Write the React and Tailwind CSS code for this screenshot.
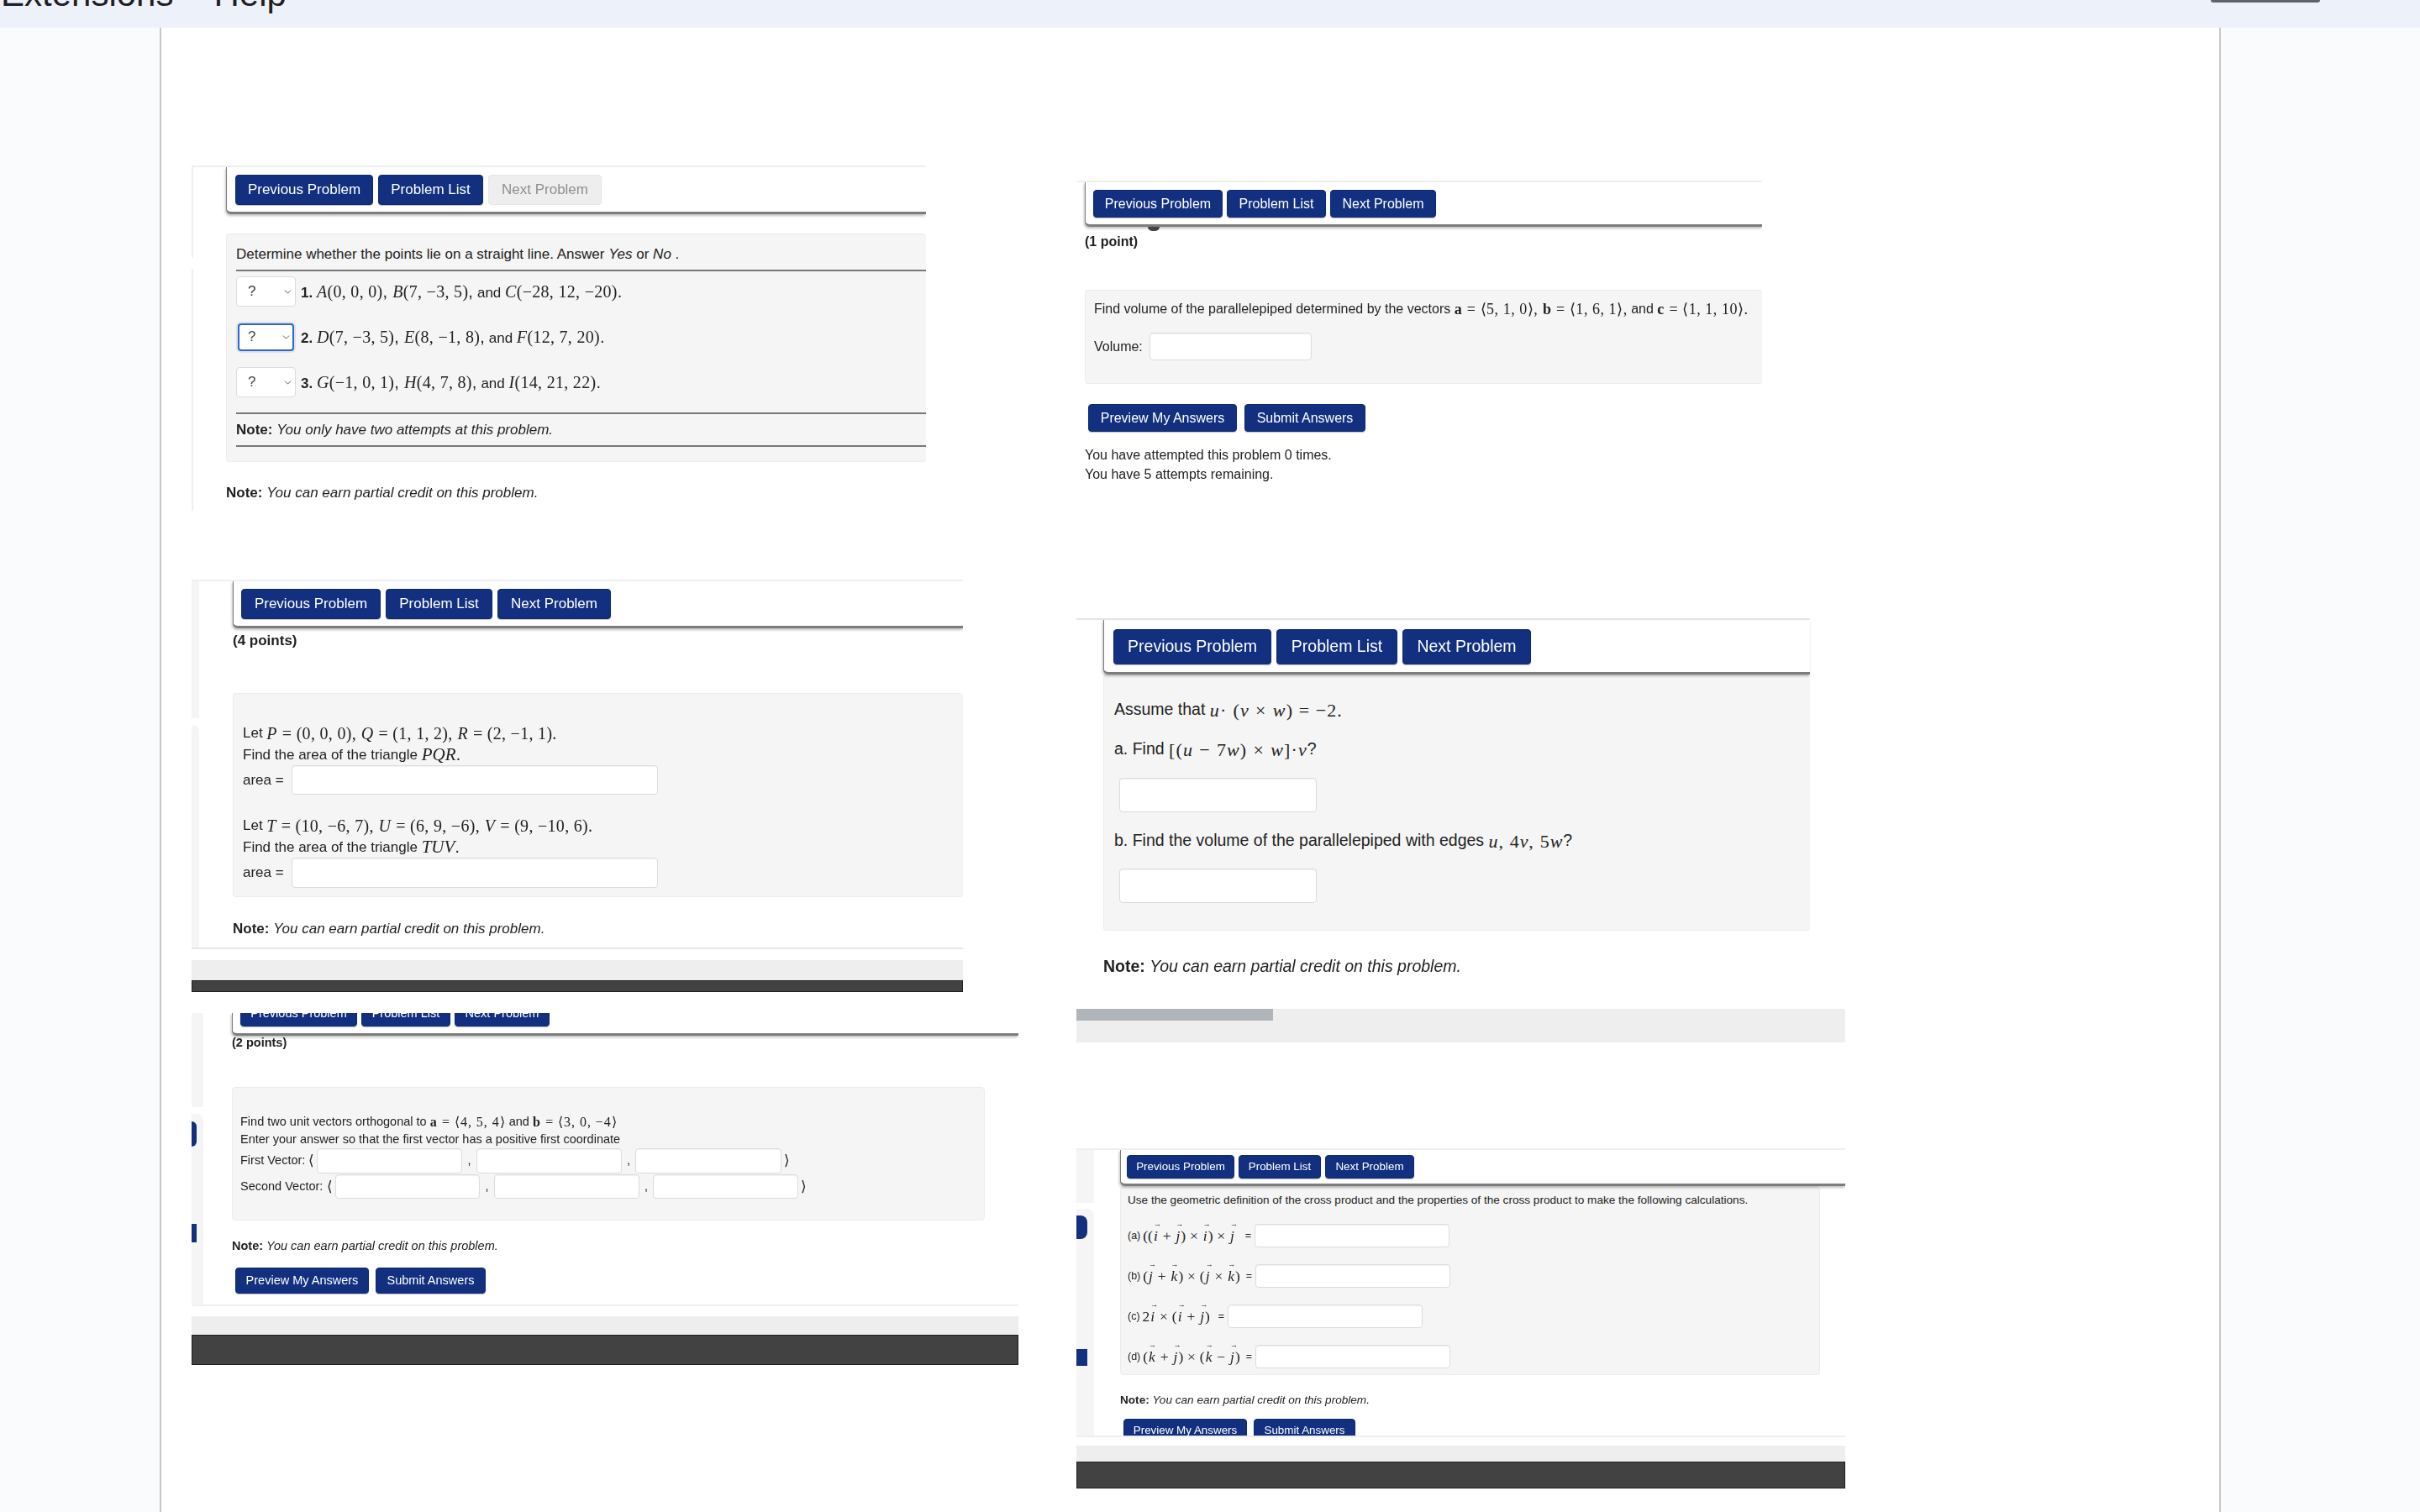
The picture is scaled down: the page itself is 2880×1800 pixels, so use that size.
import { ChevronDown } from "lucide-react";

const serif = "font-['Liberation_Serif']";
const panelBlur = "blur-[0.5px]";

function Mi({ children }) {
  return <i className={serif}>{children}</i>;
}

function Mr({ children }) {
  return <span className={serif}>{children}</span>;
}

function Mb({ children }) {
  return <b className={serif}>{children}</b>;
}

function Vec({ children }) {
  return (
    <span className="relative mx-[1px] inline-block">
      <i className={serif}>{children}</i>
      <span className="absolute -top-[6px] left-0 text-[9px] leading-[10px]">→</span>
    </span>
  );
}

function Btn({ children, className = "", disabled }) {
  return (
    <div
      className={
        "flex shrink-0 items-center justify-center rounded-[4px] border whitespace-nowrap " +
        (disabled
          ? "border-[#e6e6e6] bg-[#eeeeee] text-[#8f8f8f] "
          : "border-[#0f2a70] bg-[#12307f] text-white shadow-[0_1px_1px_rgba(0,0,0,0.25)] ") +
        className
      }
    >
      {children}
    </div>
  );
}

function Field({ className = "" }) {
  return (
    <input
      readOnly
      className={"shrink-0 rounded-[4px] border border-[#dcdcdc] bg-white shadow-[inset_0_1px_1px_rgba(0,0,0,0.06)] " + className}
    />
  );
}

function Well({ className = "", children }) {
  return <div className={"rounded-[4px] border border-[#ececec] bg-[#f5f5f5] " + className}>{children}</div>;
}

function NavBox({ className = "", children }) {
  return (
    <div
      className={
        "relative flex rounded-bl-[6px] border-b-[3px] border-l border-[#7d7d7d] bg-white shadow-[-1px_2px_3px_rgba(0,0,0,0.25)] " +
        className
      }
    >
      {children}
    </div>
  );
}

function Scrollbar({ track, bar, thumb }) {
  return (
    <div>
      <div className={"bg-[#eeeeee] " + track}>{thumb}</div>
      {bar && <div className={"border border-[#1e1e1e] bg-[#424242] " + bar} />}
    </div>
  );
}

function NoteLine({ className = "", text = "You can earn partial credit on this problem." }) {
  return (
    <div className={"flex items-center whitespace-nowrap text-[#222] " + className}>
      <b>Note:</b>&nbsp;<i>{text}</i>
    </div>
  );
}

function SelectBox({ focused }) {
  if (focused) {
    return (
      <div className="mx-[2px] my-[2px] flex h-[33px] w-[67px] shrink-0 items-center justify-between rounded-[4px] border-2 border-[#2a66d9] bg-white pl-[10px] pr-[1px] shadow-[0_0_0_2px_#e2e2e2]">
        <span className="text-[#444]">?</span>
        <ChevronDown size={13} strokeWidth={1.8} className="text-[#555]" />
      </div>
    );
  }
  return (
    <div className="flex h-[36px] w-[71px] shrink-0 items-center justify-between rounded-[4px] border border-[#dcdcdc] bg-white pl-[13px] pr-[2px]">
      <span className="text-[#444]">?</span>
      <ChevronDown size={13} strokeWidth={1.8} className="text-[#555]" />
    </div>
  );
}

function PointRow({ focused, n, children }) {
  return (
    <div className="flex h-[36px] items-center gap-[6px] whitespace-nowrap">
      <SelectBox focused={focused} />
      <span>
        <b>{n}.</b> {children}
      </span>
    </div>
  );
}

function PanelOne() {
  return (
    <section className={"flex h-[424px] w-[874px] overflow-hidden border-t-2 border-[#efefef] text-[17px] text-[#222] " + panelBlur}>
      <div className="flex w-[2px] flex-col gap-[13px]">
        <div className="h-[108px] bg-[#efefef]" />
        <div className="h-[288px] bg-[#efefef]" />
      </div>
      <div className="flex-1 pl-[39px]">
        <NavBox className="h-[56px] gap-[6px] pl-[10px] pt-[9px] text-[17px]">
          <Btn className="h-[36px] w-[164px]">Previous Problem</Btn>
          <Btn className="h-[36px] w-[125px]">Problem List</Btn>
          <Btn disabled className="h-[36px] w-[135px]">Next Problem</Btn>
        </NavBox>
        <Well className="mt-[23px] h-[272px] border-r-0 pl-[11px] pt-[6px]">
          <div className="flex h-[36px] items-center whitespace-nowrap">
            Determine whether the points lie on a straight line. Answer&nbsp;<i>Yes</i>&nbsp;or&nbsp;<i>No</i>&nbsp;.
          </div>
          <div className="h-[2px] bg-[#777]" />
          <div className="mt-[6px] flex flex-col gap-[18px]">
            <PointRow n="1">
              <span className="text-[20px] tracking-[0.015em]">
                <Mi>A</Mi><Mr>(0, 0, 0)</Mr>, <Mi>B</Mi><Mr>(7, −3, 5)</Mr>,
              </span>{" "}
              and{" "}
              <span className="text-[20px] tracking-[0.015em]"><Mi>C</Mi><Mr>(−28, 12, −20)</Mr>.</span>
            </PointRow>
            <PointRow n="2" focused>
              <span className="text-[20px] tracking-[0.015em]">
                <Mi>D</Mi><Mr>(7, −3, 5)</Mr>, <Mi>E</Mi><Mr>(8, −1, 8)</Mr>,
              </span>{" "}
              and{" "}
              <span className="text-[20px] tracking-[0.015em]"><Mi>F</Mi><Mr>(12, 7, 20)</Mr>.</span>
            </PointRow>
            <PointRow n="3">
              <span className="text-[20px] tracking-[0.015em]">
                <Mi>G</Mi><Mr>(−1, 0, 1)</Mr>, <Mi>H</Mi><Mr>(4, 7, 8)</Mr>,
              </span>{" "}
              and{" "}
              <span className="text-[20px] tracking-[0.015em]"><Mi>I</Mi><Mr>(14, 21, 22)</Mr>.</span>
            </PointRow>
          </div>
          <div className="mt-[18px] h-[2px] bg-[#777]" />
          <NoteLine className="h-[37px]" text="You only have two attempts at this problem." />
          <div className="h-[2px] bg-[#777]" />
        </Well>
        <NoteLine className="mt-[25px] h-[24px]" />
      </div>
    </section>
  );
}

function PanelTwo() {
  return (
    <section className={"h-[492px] w-[918px] overflow-hidden border-t-2 border-[#efefef] text-[#222] " + panelBlur}>
      <div className="flex h-[438px] border-b-2 border-[#e6e6e6]">
        <div className="flex w-[9px] flex-col gap-[8px]">
          <div className="h-[163px] bg-[#f5f5f5]" />
          <div className="flex-1 rounded-tr-lg bg-[#f5f5f5]" />
        </div>
        <div className="flex-1 pl-[40px] text-[17px]">
          <NavBox className="h-[56px] gap-[6px] pl-[9px] pt-[9px]">
            <Btn className="h-[36px] w-[166px]">Previous Problem</Btn>
            <Btn className="h-[36px] w-[127px]">Problem List</Btn>
            <Btn className="h-[36px] w-[135px]">Next Problem</Btn>
          </NavBox>
          <b className="mt-[3px] flex h-[24px] items-center">(4 points)</b>
          <Well className="mt-[50px] h-[243px] border-r-0 pl-[11px] pt-[34px]">
            <div className="flex h-[26px] items-center whitespace-nowrap">
              Let&nbsp;
              <span className="text-[20px] tracking-[0.015em]">
                <Mi>P</Mi> <Mr>= (0, 0, 0),</Mr> <Mi>Q</Mi> <Mr>= (1, 1, 2),</Mr> <Mi>R</Mi> <Mr>= (2, −1, 1).</Mr>
              </span>
            </div>
            <div className="flex h-[25px] items-center whitespace-nowrap">
              Find the area of the triangle&nbsp;<span className="text-[21px]"><Mi>PQR</Mi>.</span>
            </div>
            <div className="flex h-[35px] items-center gap-[9px]">
              <span className="w-[49px] whitespace-nowrap">area =</span>
              <Field className="h-[35px] w-[436px]" />
            </div>
            <div className="mt-[24px] flex h-[26px] items-center whitespace-nowrap">
              Let&nbsp;
              <span className="text-[20px] tracking-[0.015em]">
                <Mi>T</Mi> <Mr>= (10, −6, 7),</Mr> <Mi>U</Mi> <Mr>= (6, 9, −6),</Mr> <Mi>V</Mi> <Mr>= (9, −10, 6).</Mr>
              </span>
            </div>
            <div className="flex h-[25px] items-center whitespace-nowrap">
              Find the area of the triangle&nbsp;<span className="text-[21px]"><Mi>TUV</Mi>.</span>
            </div>
            <div className="flex h-[36px] items-center gap-[9px]">
              <span className="w-[49px] whitespace-nowrap">area =</span>
              <Field className="h-[36px] w-[436px]" />
            </div>
          </Well>
          <NoteLine className="mt-[26px] h-[24px]" />
        </div>
      </div>
      <Scrollbar track="mt-[13px] h-[24px]" bar="h-[14px]" />
    </section>
  );
}

function PanelThree() {
  return (
    <section className={"h-[419px] w-[984px] overflow-hidden text-[14.5px] text-[#222] " + panelBlur}>
      <div className="flex h-[349px] border-b-2 border-[#efefef]">
        <div className="flex w-[14px] flex-col gap-[8px]">
          <div className="h-[112px] bg-[#f5f5f5]" />
          <div className="flex-1 rounded-tr-lg bg-[#f5f5f5] pt-[9px]">
            <div className="h-[30px] w-[6px] rounded-r-lg bg-[#12307f]" />
            <div className="mt-[92px] h-[22px] w-[6px] bg-[#12307f]" />
          </div>
        </div>
        <div className="flex-1 pl-[34px]">
          <NavBox className="h-[27px] items-end gap-[5px] overflow-hidden pb-[8px] pl-[9px]">
            <Btn className="h-[30px] w-[139px]">Previous Problem</Btn>
            <Btn className="h-[30px] w-[106px]">Problem List</Btn>
            <Btn className="h-[30px] w-[113px]">Next Problem</Btn>
          </NavBox>
          <b className="flex h-[18px] items-center">(2 points)</b>
          <Well className="mt-[43px] h-[159px] w-[896px] pl-[9px] pt-[30px]">
            <div className="flex h-[21px] items-center whitespace-nowrap">
              Find two unit vectors orthogonal to&nbsp;
              <span className="text-[16px] tracking-[0.06em]"><Mb>a</Mb> <Mr>= ⟨4, 5, 4⟩</Mr></span>
              &nbsp;and&nbsp;
              <span className="text-[16px] tracking-[0.06em]"><Mb>b</Mb> <Mr>= ⟨3, 0, −4⟩</Mr></span>
            </div>
            <div className="flex h-[21px] items-center whitespace-nowrap">
              Enter your answer so that the first vector has a positive first coordinate
            </div>
            <div className="flex h-[30px] items-center">
              <span className="w-[78px] whitespace-nowrap">First Vector:</span>
              <span className="w-[13px] text-center text-[17px]"><Mr>⟨</Mr></span>
              <Field className="h-[30px] w-[173px]" />
              <span className="w-[17px] text-center">,</span>
              <Field className="h-[30px] w-[173px]" />
              <span className="w-[16px] text-center">,</span>
              <Field className="h-[30px] w-[174px]" />
              <span className="w-[12px] text-center text-[17px]"><Mr>⟩</Mr></span>
            </div>
            <div className="mt-[1px] flex h-[29px] items-center">
              <span className="w-[100px] whitespace-nowrap">Second Vector:</span>
              <span className="w-[13px] text-center text-[17px]"><Mr>⟨</Mr></span>
              <Field className="h-[29px] w-[172px]" />
              <span className="w-[17px] text-center">,</span>
              <Field className="h-[29px] w-[173px]" />
              <span className="w-[16px] text-center">,</span>
              <Field className="h-[29px] w-[173px]" />
              <span className="w-[12px] text-center text-[17px]"><Mr>⟩</Mr></span>
            </div>
          </Well>
          <NoteLine className="mt-[21px] h-[20px]" />
          <div className="ml-[4px] mt-[15px] flex gap-[8px]">
            <Btn className="h-[31px] w-[159px]">Preview My Answers</Btn>
            <Btn className="h-[31px] w-[131px]">Submit Answers</Btn>
          </div>
        </div>
      </div>
      <Scrollbar track="mt-[12px] h-[22px]" bar="h-[36px]" />
    </section>
  );
}

function PanelFour() {
  return (
    <section className={"h-[385px] w-[815px] overflow-hidden border-t-2 border-[#efefef] pl-[9px] text-[16px] text-[#222] " + panelBlur}>
      <NavBox className="h-[53px] gap-[5px] pl-[9px] pt-[9px]">
        <Btn className="h-[33px] w-[154px]">Previous Problem</Btn>
        <Btn className="h-[33px] w-[118px]">Problem List</Btn>
        <Btn className="h-[33px] w-[126px]">Next Problem</Btn>
        <div className="absolute -bottom-[8px] left-[74px] h-[5px] w-[14px] rounded-b-full bg-[#444]" />
      </NavBox>
      <b className="mt-[8px] flex h-[20px] items-center">(1 point)</b>
      <Well className="mt-[47px] h-[112px] border-r-0 pl-[10px] pt-[12px]">
        <div className="flex h-[20px] items-center whitespace-nowrap">
          Find volume of the parallelepiped determined by the vectors&nbsp;
          <span className="text-[18px] tracking-[0.03em]"><Mb>a</Mb> <Mr>= ⟨5, 1, 0⟩,</Mr> <Mb>b</Mb> <Mr>= ⟨1, 6, 1⟩,</Mr></span>
          &nbsp;and&nbsp;
          <span className="text-[18px] tracking-[0.03em]"><Mb>c</Mb> <Mr>= ⟨1, 1, 10⟩.</Mr></span>
        </div>
        <div className="mt-[18px] flex h-[33px] items-center gap-[7px]">
          <span className="w-[59px] whitespace-nowrap">Volume:</span>
          <Field className="h-[33px] w-[193px]" />
        </div>
      </Well>
      <div className="ml-[4px] mt-[24px] flex gap-[9px]">
        <Btn className="h-[33px] w-[177px]">Preview My Answers</Btn>
        <Btn className="h-[33px] w-[144px]">Submit Answers</Btn>
      </div>
      <div className="mt-[16px] leading-[23px]">
        <div>You have attempted this problem 0 times.</div>
        <div>You have 5 attempts remaining.</div>
      </div>
    </section>
  );
}

function PanelFive() {
  return (
    <section className={"h-[505px] w-[915px] overflow-hidden text-[19.5px] text-[#222] " + panelBlur}>
      <div className="h-[465px] w-[873px] border-t-2 border-[#e6e6e6] pl-[32px]">
        <NavBox className="h-[65px] gap-[6px] pl-[11px] pt-[11px]">
          <Btn className="h-[42px] w-[188px]">Previous Problem</Btn>
          <Btn className="h-[42px] w-[144px]">Problem List</Btn>
          <Btn className="h-[42px] w-[153px]">Next Problem</Btn>
        </NavBox>
        <Well className="h-[305px] border-r-0 pl-[12px] pt-[27px]">
          <div className="flex h-[28px] items-center whitespace-nowrap">
            Assume that&nbsp;
            <span className="text-[22px] tracking-[0.05em]"><Mi>u</Mi><Mr>·</Mr> <Mr>(</Mr><Mi>v</Mi> <Mr>×</Mr> <Mi>w</Mi><Mr>) = −2.</Mr></span>
          </div>
          <div className="mt-[19px] flex h-[28px] items-center whitespace-nowrap">
            a. Find&nbsp;
            <span className="text-[22px] tracking-[0.05em]"><Mr>[(</Mr><Mi>u</Mi> <Mr>−</Mr> <Mr>7</Mr><Mi>w</Mi><Mr>)</Mr> <Mr>×</Mr> <Mi>w</Mi><Mr>]·</Mr><Mi>v</Mi></span>?
          </div>
          <Field className="ml-[6px] mt-[20px] h-[41px] w-[235px]" />
          <div className="mt-[20px] flex h-[28px] items-center whitespace-nowrap">
            b. Find the volume of the parallelepiped with edges&nbsp;
            <span className="text-[22px] tracking-[0.04em]"><Mi>u</Mi><Mr>,</Mr> <Mr>4</Mr><Mi>v</Mi><Mr>,</Mr> <Mr>5</Mr><Mi>w</Mi></span>?
          </div>
          <Field className="ml-[6px] mt-[19px] h-[41px] w-[235px]" />
        </Well>
        <NoteLine className="mt-[29px] h-[28px]" />
      </div>
      <div className="h-[40px] bg-[#eeeeee]">
        <div className="h-[14px] w-[234px] bg-[#b0b5ba]" />
      </div>
    </section>
  );
}

function CrossRow({ label, mathWidth, children }) {
  return (
    <div className="flex h-[28px] items-center whitespace-nowrap">
      <div className={"flex items-center justify-between text-[12.5px] " + mathWidth}>
        <span className="flex items-center gap-[3px]">
          <span>{label}</span>
          <span className="text-[17.5px]">{children}</span>
        </span>
        <span>=</span>
      </div>
      <Field className="ml-[4px] h-[28px] w-[232px]" />
    </div>
  );
}

function PanelSix() {
  return (
    <section className={"h-[405px] w-[915px] overflow-hidden text-[13.6px] text-[#222] " + panelBlur}>
      <div className="flex h-[344px] overflow-hidden border-y-2 border-[#efefef]">
        <div className="flex w-[21px] flex-col gap-[7px]">
          <div className="h-[63px] bg-[#f5f5f5]" />
          <div className="flex-1 rounded-tr-lg bg-[#f5f5f5] pt-[8px]">
            <div className="h-[28px] w-[13px] rounded-r-lg bg-[#12307f]" />
            <div className="mt-[131px] h-[20px] w-[13px] bg-[#12307f]" />
          </div>
        </div>
        <div className="flex-1 pl-[31px]">
          <NavBox className="h-[43px] gap-[5px] pl-[7px] pt-[6px] text-[13.4px]">
            <Btn className="h-[28px] w-[128px]">Previous Problem</Btn>
            <Btn className="h-[28px] w-[98px]">Problem List</Btn>
            <Btn className="h-[28px] w-[106px]">Next Problem</Btn>
          </NavBox>
          <Well className="h-[225px] w-[833px] pl-[8px] pt-[6px]">
            <div className="flex h-[20px] items-center whitespace-nowrap">
              Use the geometric definition of the cross product and the properties of the cross product to make the following calculations.
            </div>
            <div className="mt-[18px] flex flex-col gap-[20px]">
              <CrossRow label="(a)" mathWidth="w-[147px]">
                <Mr>((</Mr><Vec>i</Vec> <Mr>+</Mr> <Vec>j</Vec><Mr>)</Mr> <Mr>×</Mr> <Vec>i</Vec><Mr>)</Mr> <Mr>×</Mr> <Vec>j</Vec>
              </CrossRow>
              <CrossRow label="(b)" mathWidth="w-[148px]">
                <Mr>(</Mr><Vec>j</Vec> <Mr>+</Mr> <Vec>k</Vec><Mr>)</Mr> <Mr>×</Mr> <Mr>(</Mr><Vec>j</Vec> <Mr>×</Mr> <Vec>k</Vec><Mr>)</Mr>
              </CrossRow>
              <CrossRow label="(c)" mathWidth="w-[115px]">
                <Mr>2</Mr><Vec>i</Vec> <Mr>×</Mr> <Mr>(</Mr><Vec>i</Vec> <Mr>+</Mr> <Vec>j</Vec><Mr>)</Mr>
              </CrossRow>
              <CrossRow label="(d)" mathWidth="w-[148px]">
                <Mr>(</Mr><Vec>k</Vec> <Mr>+</Mr> <Vec>j</Vec><Mr>)</Mr> <Mr>×</Mr> <Mr>(</Mr><Vec>k</Vec> <Mr>−</Mr> <Vec>j</Vec><Mr>)</Mr>
              </CrossRow>
            </div>
          </Well>
          <NoteLine className="mt-[20px] h-[20px]" />
          <div className="ml-[4px] mt-[12px] flex gap-[8px] text-[13.4px]">
            <Btn className="h-[28px] w-[147px]">Preview My Answers</Btn>
            <Btn className="h-[28px] w-[121px]">Submit Answers</Btn>
          </div>
        </div>
      </div>
      <Scrollbar track="mt-[10px] h-[19px]" bar="h-[32px]" />
    </section>
  );
}

export default function App() {
  return (
    <div className="relative h-[1800px] w-[2880px] overflow-hidden bg-[#f9fbfd] font-['Liberation_Sans',sans-serif]">
      <header className="flex h-[33px] gap-[48px] overflow-hidden bg-[#edf2fa] pl-[1px] text-[42px] leading-[42px] text-[#1f1f1f]">
        <span className="-mt-[28px]">Extensions</span>
        <span className="-mt-[28px]">Help</span>
      </header>
      <div className="absolute right-[119px] top-0 h-[3px] w-[130px] rounded-b-[10px] bg-[#5f6368]" />

      <main className="ml-[190px] flex h-[1767px] w-[2453px] border-x-2 border-[#c7c7c7] bg-white">
        <div className="ml-[36px] w-[984px]">
          <div className="mt-[164px]"><PanelOne /></div>
          <div className="mt-[69px]"><PanelTwo /></div>
          <div className="mt-[24px]"><PanelThree /></div>
        </div>
        <div className="ml-[69px] w-[915px]">
          <div className="ml-[1px] mt-[182px]"><PanelFour /></div>
          <div className="mt-[136px]"><PanelFive /></div>
          <div className="mt-[126px]"><PanelSix /></div>
        </div>
      </main>
    </div>
  );
}
